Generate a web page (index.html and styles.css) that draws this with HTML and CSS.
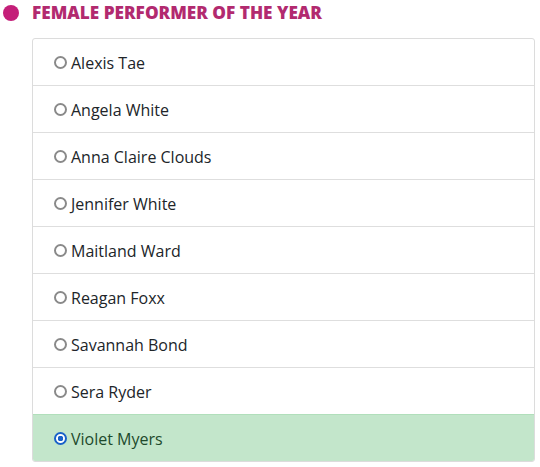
FILE: index.html
```html
<!DOCTYPE html>
<html>
<head>
<meta charset="utf-8">
<link rel="stylesheet" href="styles.css">
</head>
<body>
<div class="page">
  <h2 class="title"><span class="dot"></span><span class="title-text">FEMALE PERFORMER OF THE YEAR</span></h2>
  <ul class="list">
    <li class="item"><span class="radio"></span><span class="name">Alexis Tae</span></li>
    <li class="item"><span class="radio"></span><span class="name">Angela White</span></li>
    <li class="item"><span class="radio"></span><span class="name">Anna Claire Clouds</span></li>
    <li class="item"><span class="radio"></span><span class="name">Jennifer White</span></li>
    <li class="item"><span class="radio"></span><span class="name">Maitland Ward</span></li>
    <li class="item"><span class="radio"></span><span class="name">Reagan Foxx</span></li>
    <li class="item"><span class="radio"></span><span class="name">Savannah Bond</span></li>
    <li class="item"><span class="radio"></span><span class="name">Sera Ryder</span></li>
    <li class="item selected"><span class="radio checked"></span><span class="name">Violet Myers</span></li>
  </ul>
</div>
</body>
</html>
```
FILE: styles.css
```css
html, body { margin: 0; padding: 0; background: #fff; }
body { font-family: "Open Sans", "Liberation Sans", sans-serif; color: #212529; }
.page { width: 540px; height: 467px; overflow: hidden; }
.title {
  margin: 0;
  height: 38px;
  display: flex;
  align-items: flex-start;
  padding-top: 2px;
  box-sizing: border-box;
}
.dot {
  width: 16px; height: 16px; border-radius: 50%;
  background: #c41f79;
  margin: 3px 13px 0 3px;
  flex: none;
}
.title-text {
  font-family: "Open Sans", sans-serif;
  font-weight: 800;
  font-size: 17.2px;
  line-height: 22px;
  color: #b22a6f;
}
.list {
  list-style: none;
  margin: 0 5px 0 32px;
  padding: 0;
  border: 1px solid #dcdcdc;
  border-radius: 3px;
  overflow: hidden;
}
.item {
  display: flex;
  align-items: center;
  height: 45px;
  padding: 1px 0 0 21px;
  border-top: 1px solid #dedede;
  font-size: 16px;
  line-height: 24px;
}
.item:first-child { border-top: none; }
.radio {
  width: 13px; height: 13px; box-sizing: border-box;
  border: 2px solid #8a8a8a;
  border-radius: 50%;
  margin: -1px 4px 0 0;
  background: #fff;
  flex: none;
}
.radio.checked {
  border: 2px solid #1a62c9;
  background: radial-gradient(circle, #1a62c9 0 2.6px, #fff 3px);
}
.selected {
  background: #c3e6cb;
  border-top-color: #b1dfbb;
  color: #1d4a2c;
}
```
